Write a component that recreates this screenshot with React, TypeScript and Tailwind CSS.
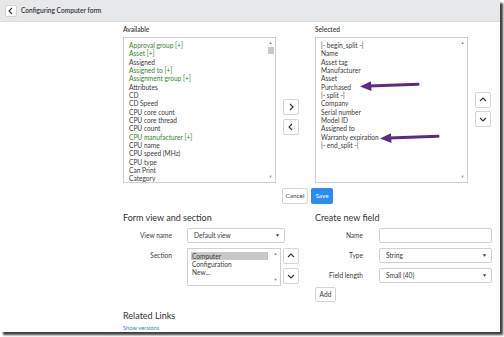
import React from "react";

const available: [string, boolean][] = [
  ["Approval group [+]", true],
  ["Asset [+]", true],
  ["Assigned", false],
  ["Assigned to [+]", true],
  ["Assignment group [+]", true],
  ["Attributes", false],
  ["CD", false],
  ["CD Speed", false],
  ["CPU core count", false],
  ["CPU core thread", false],
  ["CPU count", false],
  ["CPU manufacturer [+]", true],
  ["CPU name", false],
  ["CPU speed (MHz)", false],
  ["CPU type", false],
  ["Can Print", false],
  ["Category", false],
];

const selected = [
  "|- begin_split -|",
  "Name",
  "Asset tag",
  "Manufacturer",
  "Asset",
  "Purchased",
  "|- split -|",
  "Company",
  "Serial number",
  "Model ID",
  "Assigned to",
  "Warranty expiration",
  "|- end_split -|",
];

function Chevron({ dir }: { dir: "left" | "right" | "up" | "down" }) {
  const d = {
    left: "M6 2 L3 5 L6 8",
    right: "M4 2 L7 5 L4 8",
    up: "M2 6 L5 3 L8 6",
    down: "M2 4 L5 7 L8 4",
  }[dir];
  return (
    <svg width="10" height="10" viewBox="0 0 10 10">
      <path d={d} fill="none" stroke="#333" strokeWidth="1.1" />
    </svg>
  );
}

function SmallBtn({ dir, className = "" }: { dir: "left" | "right" | "up" | "down"; className?: string }) {
  return (
    <div
      className={`w-[16px] h-[16px] border border-[#d4d4d4] rounded-[2px] bg-white flex items-center justify-center ${className}`}
    >
      <Chevron dir={dir} />
    </div>
  );
}

function ScrollBar({ thumb }: { thumb?: boolean }) {
  return (
    <div className="absolute right-[1px] top-[1px] bottom-[1px] w-[7px] flex flex-col items-center">
      <div className="text-[4px] leading-[6px] text-[#888] mt-[1px]">▲</div>
      {thumb && <div className="w-[6px] h-[7px] bg-[#c9c9c9] mt-[1px]" />}
      <div className="flex-1" />
      <div className="text-[4px] leading-[6px] text-[#888] mb-[1px]">▼</div>
    </div>
  );
}

function Arrow({ className }: { className: string }) {
  return (
    <svg className={`absolute ${className}`} width="60" height="12" viewBox="0 0 60 12">
      <path d="M9 6 L58 4.2" stroke="#5b2c86" strokeWidth="3" strokeLinecap="round" fill="none" />
      <path d="M0 6.6 L11 1.2 L11.5 11 Z" fill="#5b2c86" />
    </svg>
  );
}

export default function App() {
  return (
    <div
      className="w-[504px] h-[337px] bg-white relative overflow-hidden"
      style={{ fontFamily: "Lato, 'Open Sans', sans-serif" }}
    >
      <div className="w-[500px] h-[332px] bg-white shadow-[3px_3px_2px_rgba(0,0,0,0.75)] text-[#3a3a3a] flex flex-col">
        {/* Header */}
        <div className="h-[22px] bg-[#e6e8e9] border-b border-[#d8dadb] flex items-center pl-[5px] shrink-0">
          <div className="w-[12px] h-[12px] bg-white border border-[#cfd1d2] rounded-[2px] flex items-center justify-center">
            <Chevron dir="left" />
          </div>
          <div className="ml-[4px] text-[6.6px] font-semibold text-[#333]">Configuring Computer form</div>
        </div>

        {/* Lists */}
        <div className="pl-[123px] flex items-start">
          <div className="w-[153px]">
            <div className="h-[15px] flex items-center text-[6.6px] font-semibold pt-[1px]">Available</div>
            <div className="relative h-[146px] border border-[#cfcfcf] pt-[3px] pl-[5px]">
              {available.map(([t, g]) => (
                <div key={t} className={`h-[8.33px] leading-[8.33px] text-[6.6px] ${g ? "text-[#3b8030]" : "text-[#3a3a3a]"}`}>
                  {t}
                </div>
              ))}
              <ScrollBar thumb />
            </div>
          </div>
          <div className="ml-[7px] mt-[77px] flex flex-col gap-[4px]">
            <SmallBtn dir="right" />
            <SmallBtn dir="left" />
          </div>
          <div className="ml-[16px] w-[153px]">
            <div className="h-[15px] flex items-center text-[6.6px] font-semibold pt-[1px]">Selected</div>
            <div className="relative h-[146px] border border-[#cfcfcf] pt-[3px] pl-[5px]">
              {selected.map((t) => (
                <div key={t} className="h-[8.33px] leading-[8.33px] text-[6.6px] text-[#3a3a3a]">
                  {t}
                </div>
              ))}
              <ScrollBar />
              <Arrow className="left-[44px] top-[42px]" />
              <Arrow className="left-[64px] top-[94px]" />
            </div>
          </div>
          <div className="ml-[7px] mt-[70px] flex flex-col gap-[3px]">
            <SmallBtn dir="up" />
            <SmallBtn dir="down" />
          </div>
        </div>

        {/* Cancel / Save */}
        <div className="pl-[282px] mt-[5px] flex gap-[3px]">
          <div className="w-[26px] h-[16px] border border-[#d4d4d4] rounded-[2px] text-[6.4px] flex items-center justify-center">
            Cancel
          </div>
          <div className="w-[22px] h-[16px] bg-[#2d8cf0] rounded-[2px] text-[6.4px] text-white flex items-center justify-center">
            Save
          </div>
        </div>

        {/* Bottom sections */}
        <div className="pl-[123px] mt-[8px] flex">
          <div className="w-[192px]">
            <div className="h-[12px] leading-[12px] text-[9px] text-[#333]">Form view and section</div>
            <div className="mt-[4px] flex items-center">
              <div className="w-[49px] text-right text-[6.6px]">View name</div>
              <div className="ml-[15px] w-[98px] h-[15px] border border-[#d0d0d0] rounded-[2px] flex items-center justify-between pl-[6px] pr-[4px] text-[6.6px]">
                <span>Default view</span>
                <span className="text-[5px]">▼</span>
              </div>
            </div>
            <div className="mt-[5px] flex items-start">
              <div className="w-[49px] text-right text-[6.6px] mt-[3px]">Section</div>
              <div className="ml-[15px] relative w-[94px] h-[38px] border border-[#d0d0d0] pt-[3px] pl-[3px]">
                <div className="w-[77px] h-[8px] leading-[8px] bg-[#c8c8c8] text-[6.6px] pl-[1px]">Computer</div>
                <div className="h-[8px] leading-[8px] text-[6.6px] pl-[1px]">Configuration</div>
                <div className="h-[8px] leading-[8px] text-[6.6px] pl-[1px]">New...</div>
                <ScrollBar />
              </div>
              <div className="ml-[2px] flex flex-col gap-[4px]">
                <SmallBtn dir="up" />
                <SmallBtn dir="down" />
              </div>
            </div>
            <div className="mt-[24px] h-[12px] leading-[12px] text-[9px] text-[#333]">Related Links</div>
            <div className="mt-[2px] text-[5.8px] text-[#4a7fc1]">Show versions</div>
          </div>
          <div className="w-[178px]">
            <div className="h-[12px] leading-[12px] text-[9px] text-[#333]">Create new field</div>
            <div className="mt-[4px] flex items-center">
              <div className="w-[48px] text-right text-[6.6px]">Name</div>
              <div className="ml-[16px] w-[113px] h-[15px] border border-[#d0d0d0] rounded-[2px]" />
            </div>
            <div className="mt-[5px] flex items-center">
              <div className="w-[48px] text-right text-[6.6px]">Type</div>
              <div className="ml-[16px] w-[113px] h-[15px] border border-[#d0d0d0] rounded-[2px] flex items-center justify-between pl-[6px] pr-[4px] text-[6.6px]">
                <span>String</span>
                <span className="text-[5px]">▼</span>
              </div>
            </div>
            <div className="mt-[5px] flex items-center">
              <div className="w-[48px] text-right text-[6.6px]">Field length</div>
              <div className="ml-[16px] w-[113px] h-[15px] border border-[#d0d0d0] rounded-[2px] flex items-center justify-between pl-[6px] pr-[4px] text-[6.6px]">
                <span>Small (40)</span>
                <span className="text-[5px]">▼</span>
              </div>
            </div>
            <div className="mt-[4px] w-[21px] h-[15px] border border-[#d4d4d4] rounded-[2px] text-[6.6px] flex items-center justify-center">
              Add
            </div>
          </div>
        </div>
      </div>
    </div>
  );
}
